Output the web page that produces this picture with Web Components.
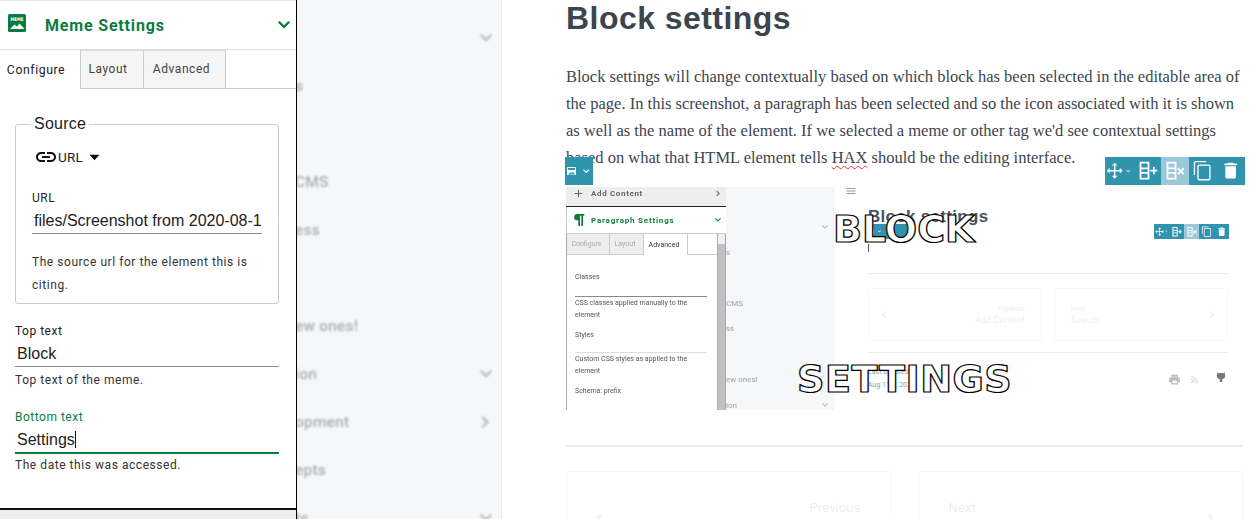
<!DOCTYPE html>
<html><head><meta charset="utf-8"><title>Block settings</title>
<style>html,body{margin:0;padding:0;background:#fff;height:519px;overflow:hidden}</style></head>
<body><app-shell></app-shell>
<script>
const P={
move:'M12 1l4 4h-3v6h6V8l4 4-4 4v-3h-6v6h3l-4 4-4-4h3v-6H5v3l-4-4 4-4v3h6V5H8z',
copy:'M16 1H4c-1.1 0-2 .9-2 2v14h1.500V2.500H16V1zm3 4H8c-1.1 0-2 .9-2 2v14c0 1.1.9 2 2 2h11c1.1 0 2-.9 2-2V7c0-1.1-.9-2-2-2zm.5 16.500h-12v-15h12v15z',
trash:'M6 19c0 1.1.9 2 2 2h8c1.1 0 2-.9 2-2V7H6v12zM19 4h-3.5l-1-1h-5l-1 1H5v2h14V4z',
link:'M3.9 12c0-1.71 1.39-3.1 3.1-3.1h4V7H7c-2.76 0-5 2.24-5 5s2.24 5 5 5h4v-1.9H7c-1.71 0-3.1-1.39-3.1-3.1zM8 13h8v-2H8v2zm9-6h-4v1.9h4c1.71 0 3.1 1.39 3.1 3.1s-1.39 3.1-3.1 3.1h-4V17h4c2.76 0 5-2.24 5-5s-2.24-5-5-5z',
colplus:'M3 2h11v20H3V2zm2 2v4.500h7V4H5zm0 6.500v3h7v-3H5zm0 5V20h7v-4.500H5zM18 11V8h2v3h3v2h-3v3h-2v-3h-3v-2h3z',
colx:'M3 2h11v20H3V2zm2 2v4.500h7V4H5zm0 6.500v3h7v-3H5zm0 5V20h7v-4.500H5zM16.400 8.600l2.600 2.600 2.600-2.600 1.400 1.400-2.600 2.600 2.600 2.600-1.400 1.400-2.600-2.600-2.600 2.600-1.400-1.400 2.600-2.600-2.600-2.600z',
chev:'M6 9.500l6 6 6-6-1.600-1.600-4.400 4.400-4.400-4.400z',
chevr:'M9 6l6 6-6 6-1.600-1.600 4.400-4.400-4.400-4.400z',
chevl:'M15 6l-6 6 6 6 1.600-1.600-4.400-4.400 4.400-4.400z',
print:'M19 8H5c-1.66 0-3 1.34-3 3v6h4v4h12v-4h4v-6c0-1.66-1.34-3-3-3zm-3 11H8v-5h8v5zm3-7c-.55 0-1-.45-1-1s.45-1 1-1 1 .45 1 1-.45 1-1 1zm-1-9H6v4h12V3z',
rss:'M6.180 15.640a2.180 2.180 0 1 1 0 4.360 2.180 2.180 0 0 1 0-4.360zM4 4.440v2.830c7.030 0 12.730 5.700 12.730 12.730h2.830c0-8.590-6.970-15.560-15.560-15.560zm0 5.660v2.830c3.900 0 7.070 3.170 7.070 7.070h2.830c0-5.470-4.430-9.900-9.900-9.900z',
git:'M5 2l2 2.500c3-1 7-1 10 0L19 2l1 5c1 3 .5 6-1.500 7.500-1 .8-2.500 1.200-4 1.300V22h-5v-6.200c-1.500-.1-3-.5-4-1.300C3.500 13 3 10 4 7z',
para:'M9.500 3H20v2.500h-2V21h-2.500V5.500h-2V21H11v-8.500H9.500a4.750 4.750 0 0 1 0-9.500z',
plus:'M19 13h-6v6h-2v-6H5v-2h6V5h2v6h6v2z',
menu:'M3 18h18v-2H3v2zm0-5h18v-2H3v2zm0-7v2h18V6H3z',
caret:'M5 8h14l-7 8z'
};
const ico=(n,s,c,st)=>`<svg width="${s}" height="${s}" viewBox="0 0 24 24" fill="${c||'currentColor'}" style="display:block;flex:none;${st||''}"><path d="${P[n]}"/></svg>`;
const memeIcon=(s,fg,bg)=>`<svg width="${s}" height="${s}" viewBox="0 0 18 18" style="display:block;flex:none;margin-top:-4px"><rect width="18" height="18" rx="1.500" fill="${bg}"/><text x="9" y="6.800" text-anchor="middle" font-family="DejaVu Sans" font-weight="700" font-size="4.800" textLength="13" lengthAdjust="spacingAndGlyphs" fill="${fg}">MEME</text><path d="M2 15l4.500-4.500 2.500 2 2.500-3 5 5.500z" fill="${fg}"/></svg>`;
function def(name,css,html){customElements.define(name,class extends HTMLElement{constructor(){super();const r=this.attachShadow({mode:'open'});r.innerHTML=`<style>${css}</style>`+(typeof html==='function'?html(this):html);}});}

def('app-shell',`:host{display:grid;grid-template-columns:297px 205px 1fr;width:1256px;height:519px;overflow:hidden;font-family:Roboto,sans-serif}`,
`<settings-panel></settings-panel><blur-nav></blur-nav><doc-page></doc-page>`);

def('settings-panel',`
:host{display:flex;flex-direction:column;height:519px;box-sizing:border-box;border-right:1px solid #000;background:#fff;color:#222;font-family:Roboto,sans-serif;overflow:hidden;position:relative;z-index:2}
.top{border-top:1px solid #e6e6e6;border-bottom:1px solid #ddd;display:flex;align-items:center;padding:0 0 0 8px;height:48px;color:#0a7d3e}
.top b{font-size:16px;font-weight:700;letter-spacing:.82px;margin-left:19px;flex:1}
.tabs{display:flex;height:38px;border-bottom:1px solid #ccc}
.tab{box-sizing:border-box;font-size:12px;letter-spacing:.55px;color:#444;background:#f5f5f5;border-right:1px solid #ccc;border-top:1px solid #ddd;display:flex;align-items:center;justify-content:center;padding:0 0 2px}
.tab.on{background:#fff;color:#222;width:81px;border-top:none;margin-bottom:-1px;height:39px;padding:1px 8px 0 0;font-size:12.300px}
.body{padding:0 17px 0 15px;flex:1;margin-top:35px}
fieldset{margin:-9px 0 0;border:1px solid #ccc;border-radius:3px;padding:0 16px;height:189px;box-sizing:border-box;position:relative}
legend{font:16px "Liberation Sans",sans-serif;letter-spacing:.25px;margin-left:-1px;padding:0 3px;line-height:18px;color:#222}
.sel{display:flex;align-items:center;height:20px;margin:14px 0 0 2px;font-size:13.500px;gap:0;letter-spacing:.2px}
.sel .c{margin-left:3px}
.lab{font:12px Roboto,sans-serif;letter-spacing:.5px;display:block;line-height:14px}
.inp{font:16px/28px "Liberation Sans",sans-serif;padding-left:2px;border-bottom:1px solid #8a8a8a;color:#222;white-space:nowrap;overflow:hidden;height:26px;margin-top:2px}
.help{font:12px/22.500px Roboto,sans-serif;letter-spacing:.55px;color:#333}
.f1{margin-top:20px}
.f1 .help{line-height:17px;margin-top:5px}
.f2 .help{line-height:17px;margin-top:3px}
.f2{margin-top:21px}
.f2 .lab{color:#0a7d3e}
.f2 .inp{border-bottom:2px solid #0a7d3e}
.cur{display:inline-block;width:1px;height:17px;background:#111;vertical-align:-3px}
.foot{height:9px;border-top:2px solid #111;background:#eee;flex:none}
`,
`<div class="top">${memeIcon(18,'#fff','#0a7d3e')}<b>Meme Settings</b>${ico('chev',24,'#0a7d3e')}</div>
<div class="tabs"><div class="tab on">Configure</div><div class="tab" style="width:63px;padding-right:8px">Layout</div><div class="tab" style="width:82px;padding-right:6px">Advanced</div></div>
<div class="body">
<fieldset><legend>Source</legend>
<div class="sel">${ico('link',24,'#111')}<span>URL</span><span class="c">${ico('caret',17,'#111')}</span></div>
<div style="margin-top:24px"><span class="lab">URL</span><div class="inp">files/Screenshot from 2020-08-1</div></div>
<div class="help" style="margin-top:17px">The source url for the element this is citing.</div>
</fieldset>
<div class="f1"><span class="lab">Top text</span><div class="inp">Block</div><div class="help">Top text of the meme.</div></div>
<div class="f2"><span class="lab">Bottom text</span><div class="inp">Settings<span class="cur"></span></div><div class="help">The date this was accessed.</div></div>
</div>
<div class="foot"></div>`);

def('blur-nav',`
:host{display:block;height:519px;background:#f5f7f9;border-right:1px solid #e6ecf1;box-sizing:border-box;overflow:hidden;font-family:Roboto,sans-serif}
.wrap{filter:blur(.8px);padding-top:14px}
.r{height:48px;display:flex;align-items:center;justify-content:space-between;padding:0 3px 0 0;font-size:15.500px;font-weight:500;white-space:nowrap;letter-spacing:.2px;color:#a8afb7}
.r span{margin-left:-2px}
`,()=>{
 const rows=[['','chev'],['s'],[''],['CMS'],['ess'],[''],['ew ones!'],['ion','chev'],['opment','chevr'],['epts'],['ts','chev']];
 return `<div class="wrap">${rows.map(([t,i])=>`<div class="r"><span>${t}</span>${i?ico(i,24,'#b5bbc2'):''}</div>`).join('')}</div>`;
});

def('hax-toolbar',`
:host{display:flex;position:absolute;background:#3094ae;color:#fff;height:1em;line-height:1}
.s{width:1em;height:1em;display:flex;align-items:center;justify-content:center}
.s svg{width:.76em;height:.76em}
.m{width:1.07em}.m svg.a{width:.62em;height:.62em;margin-left:-.05em}.m svg.b{width:.3em;height:.3em;opacity:.8}
.c2{width:.93em}
.on{background:#9cc9da}
`,
`<div class="s m"><svg class="a" viewBox="0 0 24 24" fill="#fff"><path d="${P.move}"/></svg><svg class="b" viewBox="0 0 24 24" fill="#fff"><path d="${P.chev}"/></svg></div>
<div class="s c2"><svg viewBox="0 0 24 24" fill="#fff"><path d="${P.colplus}"/></svg></div>
<div class="s on"><svg viewBox="0 0 24 24" fill="#fff"><path d="${P.colx}"/></svg></div>
<div class="s"><svg viewBox="0 0 24 24" fill="#fff"><path d="${P.copy}"/></svg></div>
<div class="s"><svg viewBox="0 0 24 24" fill="#fff"><path d="${P.trash}"/></svg></div>`);

def('block-picker',`
:host{position:absolute;display:flex;align-items:center;background:#3094ae;height:1em;width:1em;justify-content:flex-start;padding-left:.08em;box-sizing:border-box;gap:.12em}
`,()=>`<svg viewBox="0 0 18 18" style="width:.32em;height:.32em;flex:none"><rect width="18" height="18" rx="1.500" fill="#fff"/><rect x="2" y="2" width="14" height="4" fill="#3094ae"/><path d="M2 15l4.500-4.500 2.500 2 2.500-3 5 5.500z" fill="#3094ae"/></svg><svg viewBox="0 0 24 24" fill="#fff" style="width:.45em;height:.45em;flex:none"><path d="${P.chev}"/></svg>`);

def('meme-line',`
:host{position:absolute;font:700 38px/44px "DejaVu Sans",sans-serif;color:#fff;-webkit-text-stroke:1.200px #000;white-space:nowrap;text-shadow:-.7px 0 0 rgba(220,130,30,.8),.7px 0 0 rgba(40,130,230,.8)}
`,`<slot></slot>`);

def('pager-cards',`
:host{display:grid;grid-template-columns:1fr 1fr;gap:var(--gap,26px);font-family:Roboto,sans-serif;color:#eceef0}
.c{border:1px solid #f6f7f8;border-radius:3px;height:var(--h,97px);box-sizing:border-box;display:flex;align-items:center;justify-content:space-between;padding:0 var(--pad,18px);filter:blur(.7px)}
.t{display:flex;flex-direction:column;gap:.2em;font-size:var(--fs,17px)}
.t small{font-size:.78em}
.r{text-align:right;margin-right:var(--tm,12px)}
.l{margin-left:var(--tm,12px)}
`,
e=>{const s=+(e.getAttribute('icon')||24);return `<div class="c">${ico('chevl',s,'#eceef0')}<div class="t r"><small>Previous</small><span>Add Content</span></div></div>
<div class="c"><div class="t l"><small>Next</small><span>Search</span></div>${ico('chevr',s,'#eceef0')}</div>`});

def('mini-panel',`
:host{display:flex;flex-direction:column;width:160px;height:223px;flex:none;background:#fff;font:7px Roboto,sans-serif;color:#444;box-sizing:border-box;overflow:hidden;filter:blur(.25px)}
.add{height:12px;padding:0 2px 7px 6px;background:#eee;border-bottom:1px solid #222;display:flex;align-items:center;gap:6px;font-weight:700;font-size:8px;letter-spacing:.65px;color:#666;flex:none}
.add span{flex:1}
.hd{height:26px;display:flex;align-items:center;padding:0 2px 0 4px;color:#0a7d3e;font-weight:700;font-size:8px;letter-spacing:.8px;border-left:1px solid #ccc;flex:none;box-sizing:border-box}
.hd span{flex:1;margin-left:4px}
.main{flex:1;display:flex;min-height:0;border-left:1px solid #aaa;border-top:1px solid #ccc}
.col{flex:1;position:relative}
.tabs{display:flex;height:20px;border-bottom:1px solid #ccc}
.tab{display:flex;align-items:center;justify-content:center;background:#eee;color:#aaa;border-right:1px solid #ccc;box-sizing:border-box;padding-right:3px}
.tab.on{background:#fff;color:#333;margin-bottom:-1px;height:21px}
.tabs i{flex:1}
.txt{padding:0 10px 0 8px;line-height:12px;color:#555}
.ln{height:1px;background:#8a8a8a}
.sb{width:9px;border-left:1px solid #aaa;background:#f1f1f1;border-right:1px solid #aaa;box-sizing:border-box;padding:10px 0 0;display:flex}
.sb b{flex:1;background:#c1c1c1}
`,
`<div class="add">${ico('plus',13,'#666')}<span>Add Content</span>${ico('chevr',11,'#666')}</div>
<div class="hd">${ico('para',16,'#0a7d3e')}<span>Paragraph Settings</span>${ico('chev',12,'#0a7d3e')}</div>
<div class="main"><div class="col">
<div class="tabs"><div class="tab" style="width:43px">Configure</div><div class="tab" style="width:34px">Layout</div><div class="tab on" style="width:44px">Advanced</div><i></i></div>
<div class="txt" style="padding-top:16px">Classes</div>
<div class="txt"><div class="ln" style="margin-top:13px"></div></div>
<div class="txt">CSS classes applied manually to the element</div>
<div class="txt" style="margin-top:8px">Styles</div>
<div class="txt"><div class="ln" style="margin-top:11px;background:#ddd"></div></div>
<div class="txt">Custom CSS styles as applied to the element</div>
<div class="txt" style="margin-top:8px">Schema: prefix</div>
</div><div class="sb"><b></b></div></div>`);

def('mini-nav',`
:host{display:block;width:108px;height:223px;flex:none;background:#f5f7f9;border-right:1px solid #eef1f4;box-sizing:border-box;overflow:hidden;font:500 8px Roboto,sans-serif;color:#a8afb7}
.w{filter:blur(.4px);padding-top:27px}
.r{height:25.500px;display:flex;align-items:center;justify-content:space-between;padding-right:2px;white-space:nowrap}
`,()=>{const rows=[['','chev'],['s'],[''],['CMS'],['ss'],[''],['ew ones!'],['ion','chev']];
return `<div class="w">${rows.map(([t,i])=>`<div class="r"><span>${t}</span>${i?ico(i,12,'#b5bbc2'):''}</div>`).join('')}</div>`});

def('mini-doc',`
:host{display:block;flex:1;height:223px;position:relative;background:#fff;padding:0 5px 0 34px;box-sizing:border-box;color:#3b454e;overflow:hidden}
.burger{position:absolute;left:11px;top:-2px}
h3{margin:0;padding-top:20px;font:700 17px/19px "Liberation Sans",sans-serif;letter-spacing:.3px;color:#4a535c}
.cur{width:1px;height:8px;background:#555;margin-top:18px}
.hr{height:1px;background:#e8ebef}
.meta{display:flex;justify-content:space-between;align-items:center;margin-top:13px;font:7px/13px Roboto,sans-serif;color:#99a;padding-right:1px}
.ic{display:flex;filter:blur(.4px);align-items:center}
`,`<div class="burger">${ico('menu',12,'#999')}</div>
<h3>Block settings</h3>
<block-picker style="font-size:15px;left:34px;top:37px;width:39px"></block-picker>
<hax-toolbar style="font-size:15px;left:320px;top:37px"></hax-toolbar>
<div class="cur"></div><div class="hr" style="margin-top:21px"></div>
<pager-cards icon="13" style="--gap:12px;--h:53px;--pad:8px;--fs:9px;--tm:8px;margin-top:14px"></pager-cards>
<div class="hr" style="margin-top:11px"></div>
<div class="meta"><div>Last updated<br>Aug 11th, 2020</div><div class="ic">${ico('print',13,'#bbb','margin-right:8px')}${ico('rss',11,'#ddd','margin-right:15px')}${ico('git',12,'#777','margin-top:-5px')}</div></div>`);

def('doc-page',`
:host{display:block;height:519px;box-sizing:border-box;padding:0 13px 0 64px;color:#3b454e;position:relative;overflow:hidden;background:#fff}
h1{margin:0;font:700 32px/37px "Liberation Sans",sans-serif;letter-spacing:.45px;color:#3b454e}
p{margin:26px 0 0;font:16.500px/27px "Liberation Serif",serif;color:#3b454e;width:677px}
u{text-decoration:underline wavy #e33 1px;text-underline-offset:2px}
.fig{display:flex;width:667px;height:223px;margin-top:16px;position:relative}
hr{border:0;height:2px;background:#e6ecf1;margin:35px 0 24px}
`,
`<h1>Block settings</h1>
<p>Block settings will change contextually based on which block has been selected in the editable area of the page. In this screenshot, a paragraph has been selected and so the icon associated with it is shown as well as the name of the element. If we selected a meme or other tag we'd see contextual settings based on what that HTML element tells <u>HAX</u> should be the editing interface.</p>
<block-picker style="font-size:28px;left:63px;top:157px"></block-picker>
<hax-toolbar style="font-size:28px;left:603px;top:157px"></hax-toolbar>
<div class="fig"><mini-panel></mini-panel><mini-nav></mini-nav><mini-doc></mini-doc>
<meme-line style="left:267px;top:20px">BLOCK</meme-line>
<meme-line style="left:231px;top:170px;letter-spacing:.6px">SETTINGS</meme-line></div>
<hr><pager-cards></pager-cards>`);
</script></body></html>
